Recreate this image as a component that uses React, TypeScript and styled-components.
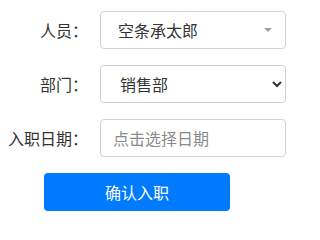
import styled, { createGlobalStyle, css } from "styled-components";

const GlobalStyle = createGlobalStyle`
  body {
    margin: 8px;
    font-family: "Noto Sans CJK SC", "Noto Sans", sans-serif;
    color: #333;
    background: #fff;
  }
  input, select, button {
    font-family: "Noto Sans CJK SC", "Noto Sans", sans-serif;
    font-size: 16px;
  }
`;

const Form = styled.form`
  display: flex;
  flex-direction: column;
  gap: 16px;
  padding-top: 3px;
`;

const Row = styled.div`
  display: flex;
  align-items: center;
  gap: 12px;
`;

const Label = styled.label`
  width: 80px;
  text-align: right;
  font-size: 16px;
  color: #333;
`;

const fieldBase = css`
  box-sizing: border-box;
  width: 186px;
  height: 38px;
  margin: 0;
  border: 1px solid #ced4da;
  border-radius: 4px;
  background: #fff;
  font-size: 16px;
  color: #333;
`;

const Picker = styled.div`
  ${fieldBase}
  display: flex;
  align-items: center;
  justify-content: space-between;
  padding: 0 13px 0 17px;
`;

const Caret = styled.span`
  width: 0;
  height: 0;
  border-left: 4px solid transparent;
  border-right: 4px solid transparent;
  border-top: 4px solid #a0a0a0;
`;

const Select = styled.select`
  ${fieldBase}
  padding: 0 8px 0 15px;
`;

const Input = styled.input`
  ${fieldBase}
  padding: 0 12px;
  font: 16px "Noto Sans CJK SC", "Noto Sans", sans-serif;
  &::placeholder {
    color: #8a8a8a;
    font: 16px "Noto Sans CJK SC", "Noto Sans", sans-serif;
  }
`;

const SubmitButton = styled.button`
  box-sizing: border-box;
  margin-left: 36px;
  width: 186px;
  height: 38px;
  border: none;
  border-radius: 4px;
  background: #007bff;
  color: #fff;
  font-size: 16px;
`;

export default function App() {
  return (
    <>
      <GlobalStyle />
      <Form onSubmit={(e) => e.preventDefault()}>
        <Row>
          <Label>人员：</Label>
          <Picker>
            <span>空条承太郎</span>
            <Caret />
          </Picker>
        </Row>
        <Row>
          <Label>部门：</Label>
          <Select defaultValue="sales">
            <option value="sales">销售部</option>
            <option value="tech">技术部</option>
          </Select>
        </Row>
        <Row>
          <Label>入职日期：</Label>
          <Input type="text" placeholder="点击选择日期" />
        </Row>
        <SubmitButton type="submit">确认入职</SubmitButton>
      </Form>
    </>
  );
}
